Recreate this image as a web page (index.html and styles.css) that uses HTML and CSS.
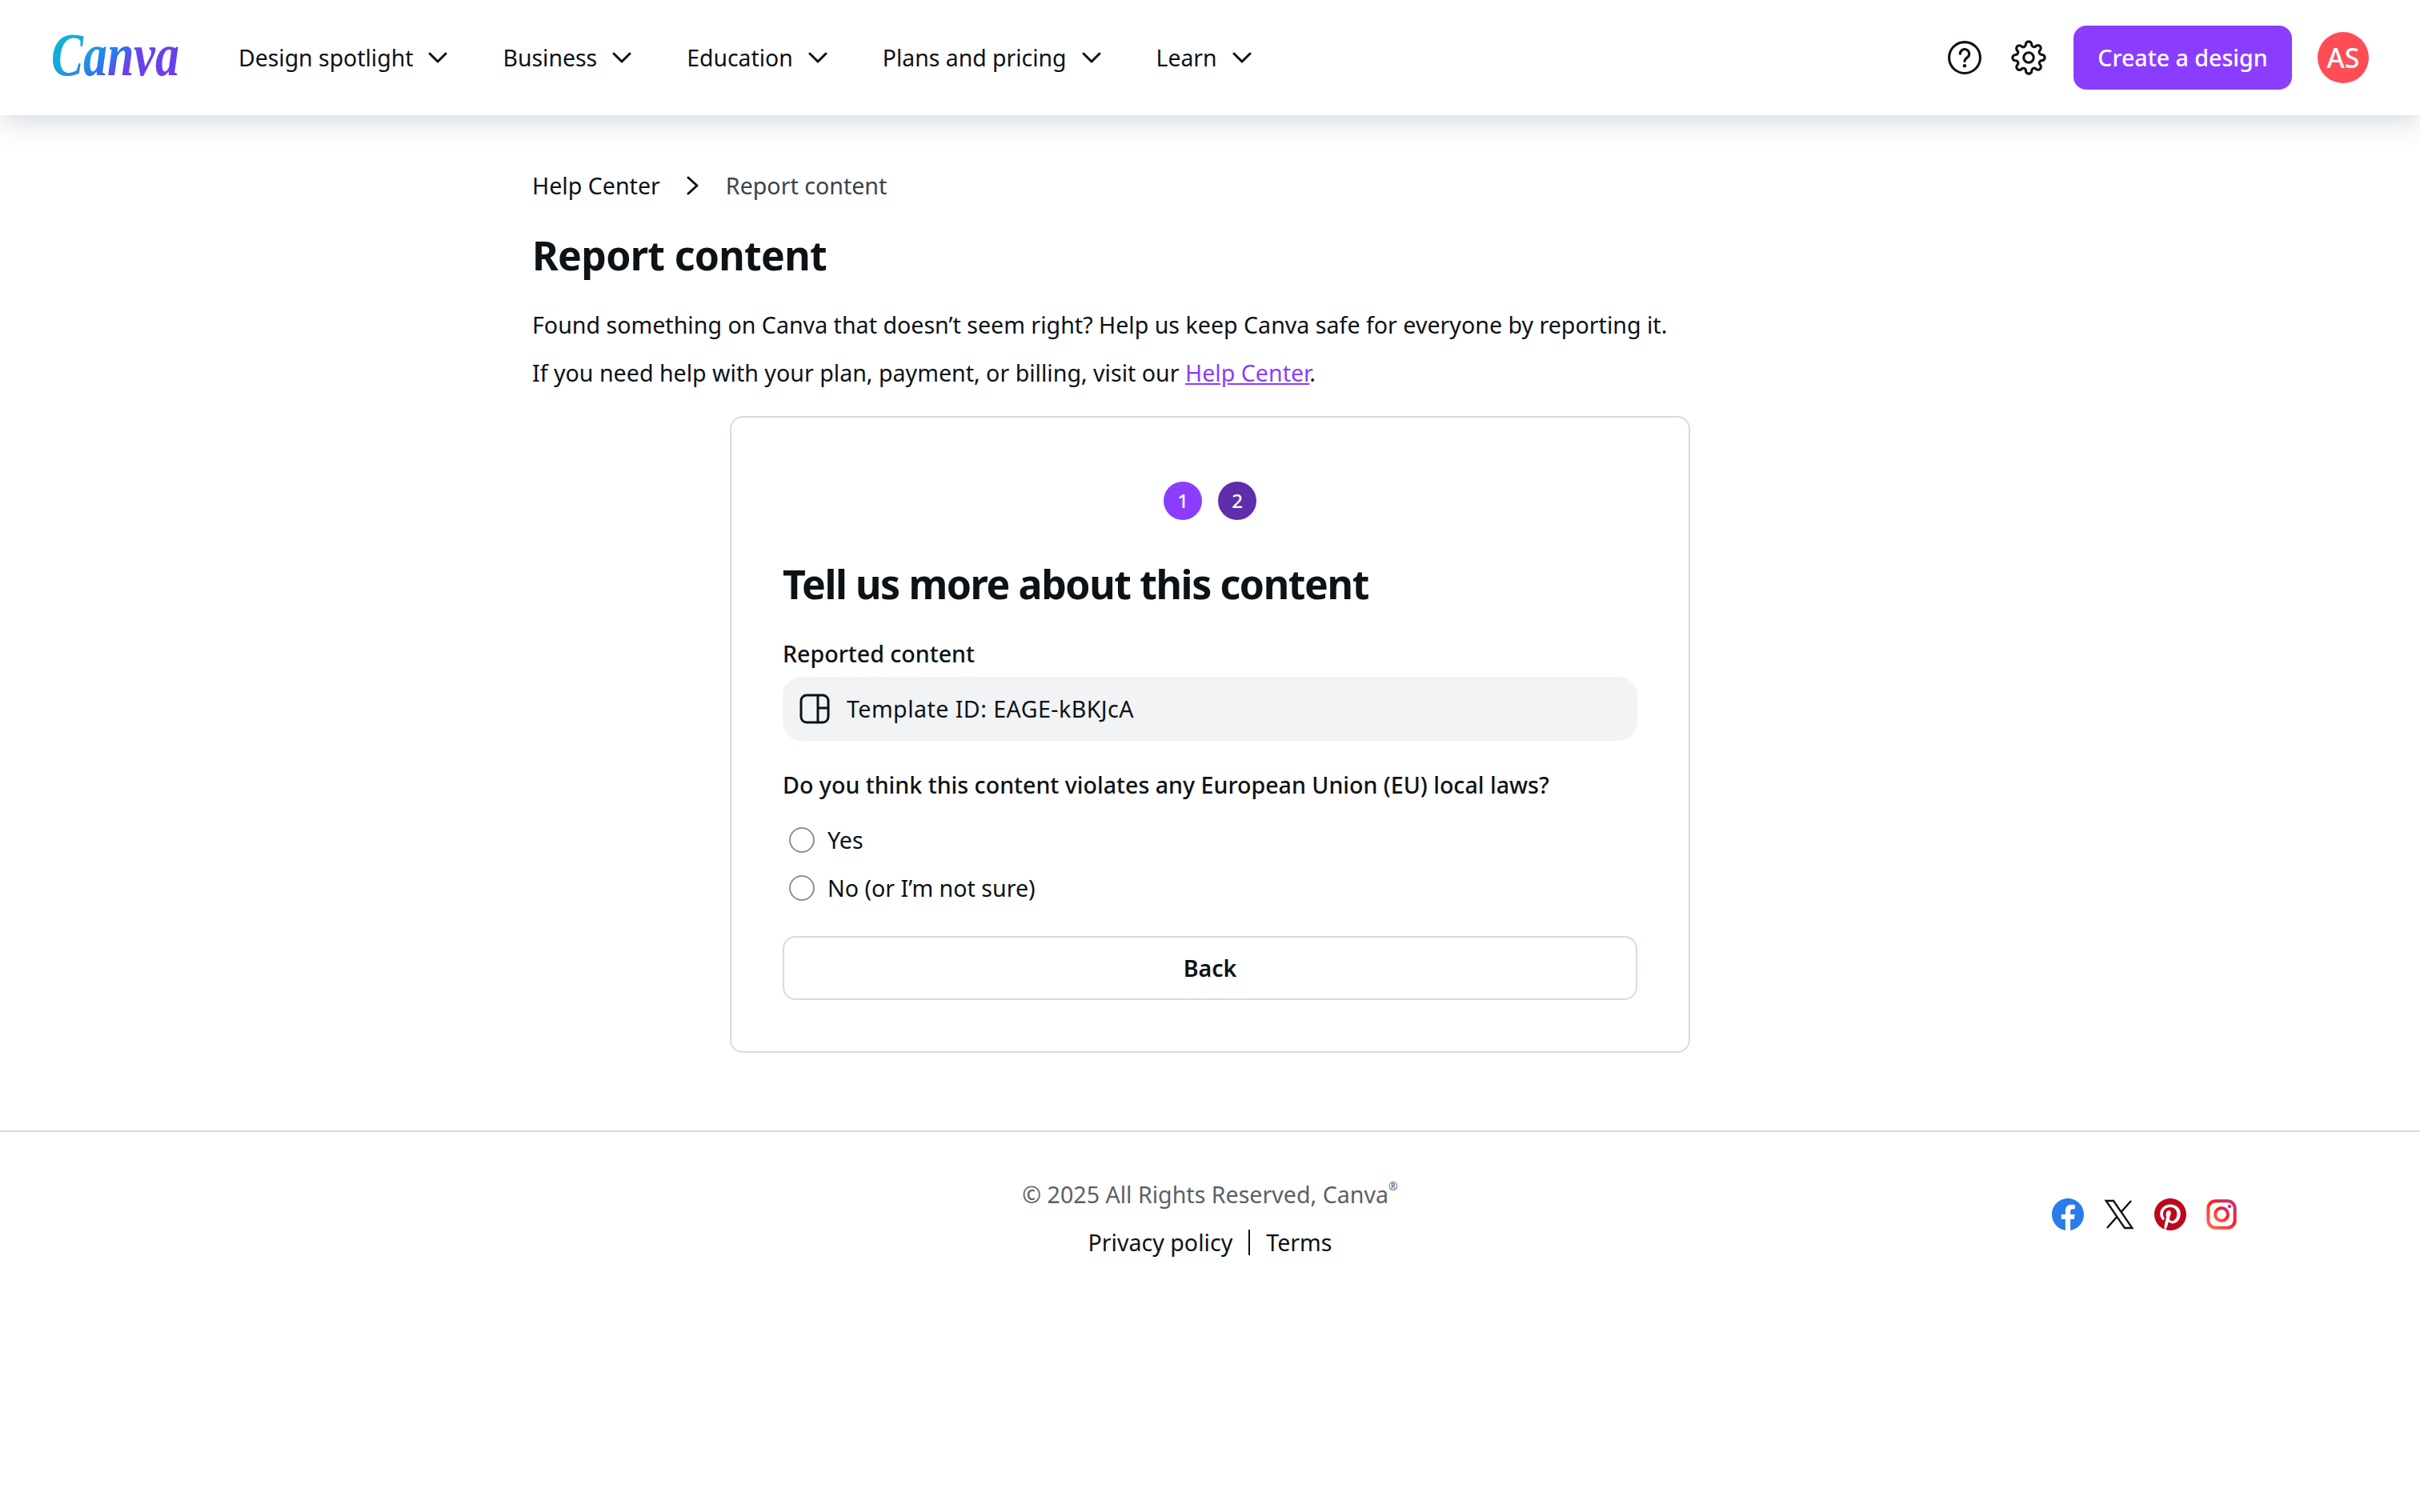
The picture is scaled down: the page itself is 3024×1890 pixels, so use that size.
FILE: index.html
```html
<!DOCTYPE html>
<html lang="en">
<head>
  <meta charset="utf-8">
  <title>Report content</title>
  <link rel="stylesheet" href="styles.css">
</head>
<body>
  <header class="topbar">
    <a class="logo" href="#">
      <svg width="160" height="60" viewBox="0 0 160 60">
        <defs>
          <linearGradient id="logoGrad" x1="0" y1="0" x2="1" y2="0.6">
            <stop offset="0" stop-color="#00c0d4"/>
            <stop offset="0.4" stop-color="#1fa0dc"/>
            <stop offset="0.58" stop-color="#2a78ee"/>
            <stop offset="0.72" stop-color="#6a42e8"/>
            <stop offset="1" stop-color="#6a3ff0"/>
          </linearGradient>
        </defs>
        <text class="logo-text" x="0" y="52" textLength="160" lengthAdjust="spacingAndGlyphs" fill="url(#logoGrad)">Canva</text>
      </svg>
    </a>
    <nav class="nav">
      <a class="nav-item" href="#">Design spotlight <svg class="chev" viewBox="0 0 24 24"><path d="M2 7l10 10L22 7"/></svg></a>
      <a class="nav-item" href="#">Business <svg class="chev" viewBox="0 0 24 24"><path d="M2 7l10 10L22 7"/></svg></a>
      <a class="nav-item" href="#">Education <svg class="chev" viewBox="0 0 24 24"><path d="M2 7l10 10L22 7"/></svg></a>
      <a class="nav-item" href="#">Plans and pricing <svg class="chev" viewBox="0 0 24 24"><path d="M2 7l10 10L22 7"/></svg></a>
      <a class="nav-item" href="#">Learn <svg class="chev" viewBox="0 0 24 24"><path d="M2 7l10 10L22 7"/></svg></a>
    </nav>
    <div class="topbar-right">
      <svg class="tool-icon help-icon" viewBox="0 0 24 24">
        <circle cx="12" cy="12" r="10.6"/>
        <path d="M8.9 9.4a3.1 3.1 0 1 1 4.8 2.6c-1 .7-1.7 1.2-1.7 2.4"/>
        <circle class="dot" cx="12" cy="17.6" r="1.2"/>
      </svg>
      <svg class="tool-icon gear-icon" viewBox="0 0 24 24">
        <circle cx="12" cy="12" r="3.4"/>
        <path d="M19.4 15a1.65 1.65 0 0 0 .33 1.82l.06.06a2 2 0 0 1 0 2.83 2 2 0 0 1-2.83 0l-.06-.06a1.65 1.65 0 0 0-1.82-.33 1.65 1.65 0 0 0-1 1.51V21a2 2 0 0 1-2 2 2 2 0 0 1-2-2v-.09A1.65 1.65 0 0 0 9 19.4a1.65 1.65 0 0 0-1.82.33l-.06.06a2 2 0 0 1-2.83 0 2 2 0 0 1 0-2.83l.06-.06a1.65 1.65 0 0 0 .33-1.82 1.65 1.65 0 0 0-1.51-1H3a2 2 0 0 1-2-2 2 2 0 0 1 2-2h.09A1.65 1.65 0 0 0 4.6 9a1.65 1.65 0 0 0-.33-1.82l-.06-.06a2 2 0 0 1 0-2.83 2 2 0 0 1 2.83 0l.06.06a1.65 1.65 0 0 0 1.82.33H9a1.65 1.65 0 0 0 1-1.51V3a2 2 0 0 1 2-2 2 2 0 0 1 2 2v.09a1.65 1.65 0 0 0 1 1.51 1.65 1.65 0 0 0 1.82-.33l.06-.06a2 2 0 0 1 2.83 0 2 2 0 0 1 0 2.83l-.06.06a1.65 1.65 0 0 0-.33 1.82V9a1.65 1.65 0 0 0 1.51 1H21a2 2 0 0 1 2 2 2 2 0 0 1-2 2h-.09a1.65 1.65 0 0 0-1.51 1z"/>
      </svg>
      <a class="create-btn" href="#">Create a design</a>
      <div class="avatar">AS</div>
    </div>
  </header>

  <main class="page">
    <div class="breadcrumb">
      <a href="#">Help Center</a>
      <svg class="crumb-sep" viewBox="0 0 16 24"><path d="M3 2l11 10L3 22"/></svg>
      <span class="crumb-current">Report content</span>
    </div>
    <h1 class="page-title">Report content</h1>
    <p class="intro">Found something on Canva that doesn’t seem right? Help us keep Canva safe for everyone by reporting it.</p>
    <p class="intro">If you need help with your plan, payment, or billing, visit our <a class="link" href="#">Help Center</a>.</p>

    <section class="card">
      <div class="steps">
        <span class="step">1</span>
        <span class="step step-active">2</span>
      </div>
      <h2 class="card-title">Tell us more about this content</h2>
      <div class="label">Reported content</div>
      <div class="reported">
        <svg class="layout-icon" viewBox="0 0 40 40">
          <rect x="3" y="3" width="34" height="34" rx="7"/>
          <path d="M24 3v34M24 19h13"/>
        </svg>
        <span class="reported-id">Template ID: EAGE-kBKJcA</span>
      </div>
      <div class="label question">Do you think this content violates any European Union (EU) local laws?</div>
      <div class="radios">
        <label class="radio-row"><span class="radio"></span>Yes</label>
        <label class="radio-row"><span class="radio"></span>No (or I’m not sure)</label>
      </div>
      <button class="back-btn">Back</button>
    </section>
  </main>

  <footer class="footer">
    <div></div>
    <div class="footer-mid">
      <div class="copyright">© 2025 All Rights Reserved, Canva<sup>®</sup></div>
      <div class="footer-links">
        <a href="#">Privacy policy</a>
        <span class="footer-sep"></span>
        <a href="#">Terms</a>
      </div>
    </div>
    <div class="socials">
      <svg viewBox="0 0 24 24"><path fill="#2a7ce8" d="M24 12.07C24 5.4 18.63 0 12 0S0 5.4 0 12.07c0 6.03 4.39 11.02 10.13 11.93v-8.44H7.08v-3.49h3.05V9.41c0-3.02 1.79-4.69 4.53-4.69 1.31 0 2.69.24 2.69.24v2.97h-1.52c-1.49 0-1.96.93-1.96 1.89v2.25h3.33l-.53 3.49h-2.8V24C19.61 23.09 24 18.1 24 12.07z"/></svg>
      <svg class="x-icon" viewBox="0 0 24 24"><path d="M2.2 1.8h5.6l14 20.4h-5.6zM21 1.8l-7.6 8.6M3 22.2l7.8-8.9"/></svg>
      <svg viewBox="0 0 24 24"><path fill="#bd081c" d="M12 0C5.373 0 0 5.372 0 12c0 5.084 3.163 9.426 7.627 11.174-.105-.949-.2-2.405.042-3.441.218-.937 1.407-5.965 1.407-5.965s-.359-.719-.359-1.782c0-1.668.967-2.914 2.171-2.914 1.023 0 1.518.769 1.518 1.69 0 1.029-.655 2.568-.994 3.995-.283 1.194.599 2.169 1.777 2.169 2.133 0 3.772-2.249 3.772-5.495 0-2.873-2.064-4.882-5.012-4.882-3.414 0-5.418 2.561-5.418 5.207 0 1.031.397 2.138.893 2.738a.36.36 0 0 1 .083.345l-.333 1.36c-.053.22-.174.267-.402.161-1.499-.698-2.436-2.889-2.436-4.649 0-3.785 2.75-7.262 7.929-7.262 4.163 0 7.398 2.967 7.398 6.931 0 4.136-2.607 7.464-6.227 7.464-1.216 0-2.359-.631-2.75-1.378l-.748 2.853c-.271 1.043-1.002 2.35-1.492 3.146C9.57 23.812 10.763 24 12 24c6.627 0 12-5.373 12-12S18.627 0 12 0z"/></svg>
      <svg viewBox="0 0 24 24">
        <defs>
          <linearGradient id="igGrad" x1="0" y1="1" x2="1" y2="0">
            <stop offset="0" stop-color="#ff6a55"/>
            <stop offset="0.6" stop-color="#fd1d1d"/>
            <stop offset="1" stop-color="#c13584"/>
          </linearGradient>
        </defs>
        <rect class="ig" x="2" y="2" width="20" height="20" rx="5.5"/>
        <circle class="ig" cx="12" cy="12" r="4.8"/>
        <circle cx="18" cy="6" r="1.3" fill="#d62976"/>
      </svg>
    </div>
  </footer>
</body>
</html>
```

FILE: styles.css
```css
* {
  box-sizing: border-box;
}

body {
  margin: 0;
  background: #fff;
  color: #0d1216;
  font-family: "Noto Sans", sans-serif;
  font-size: 28.6px;
  line-height: 48px;
}

a {
  color: inherit;
  text-decoration: none;
}

/* top bar */
.topbar {
  display: flex;
  align-items: center;
  height: 144px;
  padding: 0 64px;
  background: #fff;
  box-shadow: 0 8px 32px rgba(64, 87, 109, 0.22);
}

.logo {
  display: block;
  width: 160px;
  height: 60px;
}

.logo svg {
  overflow: visible;
}

.logo-text {
  font-family: "Liberation Serif", serif;
  font-style: italic;
  font-weight: 700;
  font-size: 76px;
}

.nav {
  display: flex;
  gap: 69px;
  margin-left: 74px;
  font-size: 28.4px;
}

.nav-item {
  display: flex;
  align-items: center;
  gap: 19px;
}

.chev {
  width: 24px;
  height: 24px;
  fill: none;
  stroke: #0d1216;
  stroke-width: 3;
  stroke-linecap: round;
  stroke-linejoin: round;
}

.topbar-right {
  display: flex;
  align-items: center;
  margin-left: auto;
}

.tool-icon {
  width: 44px;
  height: 44px;
  fill: none;
  stroke: #0d1216;
  stroke-width: 1.7;
  stroke-linecap: round;
  stroke-linejoin: round;
}

.help-icon {
  margin-right: 36px;
}

.gear-icon {
  margin-right: 34px;
}

.dot {
  fill: #0d1216;
  stroke: none;
}

.create-btn {
  display: block;
  height: 80px;
  width: 273px;
  line-height: 80px;
  text-align: center;
  border-radius: 16px;
  background: #8b3dff;
  color: #fff;
  font-weight: 500;
}

.avatar {
  width: 64px;
  height: 64px;
  margin-left: 32px;
  border-radius: 50%;
  background: #ff4d57;
  color: #fff;
  font-size: 34px;
  font-weight: 500;
  line-height: 64px;
  text-align: center;
}

/* page body */
.page {
  width: 1694px;
  margin: 0 auto;
  padding-top: 64px;
}

.breadcrumb {
  display: flex;
  align-items: center;
}

.crumb-sep {
  width: 16px;
  height: 24px;
  margin: 0 34px 0 32px;
  fill: none;
  stroke: #0d1216;
  stroke-width: 3;
  stroke-linecap: round;
  stroke-linejoin: round;
}

.crumb-current {
  color: #3c434b;
}

.page-title {
  margin: 31px 0 0;
  font-size: 50px;
  line-height: 64px;
  font-weight: 700;
  letter-spacing: -0.7px;
}

.intro {
  margin: 0 0 12px;
}

.page-title + .intro {
  margin-top: 31px;
}

.link {
  color: #8b3dff;
  text-decoration: underline;
}

.card {
  width: 1200px;
  margin: 30px auto 0;
  padding: 80px 64px 64px;
  border: 2px solid #d8dbdf;
  border-radius: 16px;
}

.steps {
  display: flex;
  justify-content: center;
  gap: 20px;
}

.step {
  width: 48px;
  height: 48px;
  border-radius: 50%;
  background: #8b3dff;
  color: #fff;
  font-size: 24px;
  font-weight: 500;
  line-height: 48px;
  text-align: center;
}

.step-active {
  background: #5f2eaa;
}

.card-title {
  margin: 50px 0 0;
  font-size: 50px;
  line-height: 60px;
  font-weight: 700;
  letter-spacing: -1.4px;
}

.label {
  margin-top: 33px;
  font-weight: 500;
}

.reported {
  display: flex;
  align-items: center;
  gap: 20px;
  height: 80px;
  margin-top: 5px;
  padding: 0 20px;
  border-radius: 24px;
  background: #f2f3f5;
}

.reported-id {
  letter-spacing: 0.45px;
}

.layout-icon {
  width: 40px;
  height: 40px;
  fill: none;
  stroke: #0d1216;
  stroke-width: 3;
}

.question {
  margin-top: 31px;
}

.radios {
  display: flex;
  flex-direction: column;
  gap: 12px;
  margin-top: 21px;
}

.radio-row {
  display: flex;
  align-items: center;
  gap: 16px;
  padding-left: 8px;
}

.radio {
  width: 32px;
  height: 32px;
  border: 2px solid #8c9096;
  border-radius: 50%;
}

.back-btn {
  display: block;
  width: 100%;
  height: 80px;
  margin-top: 36px;
  border: 2px solid #d8dbdf;
  border-radius: 16px;
  background: #fff;
  color: #0d1216;
  font: inherit;
  font-weight: 600;
}

/* footer */
.footer {
  display: grid;
  grid-template-columns: 1fr auto 1fr;
  margin-top: 97px;
  padding: 54px 228px 0;
  border-top: 2px solid #d8dbdf;
}

.footer-mid {
  display: flex;
  flex-direction: column;
  align-items: center;
  gap: 12px;
}

.copyright {
  color: #5a6068;
}

.copyright sup {
  font-size: 14px;
  line-height: 0;
  vertical-align: 16px;
}

.footer-links {
  display: flex;
  align-items: center;
}

.footer-sep {
  width: 2px;
  height: 32px;
  margin: 0 20px;
  background: #0d1216;
}

.socials {
  display: flex;
  justify-content: flex-end;
  gap: 24px;
  margin-top: 29px;
}

.socials svg {
  width: 40px;
  height: 40px;
}

.x-icon {
  fill: none;
  stroke: #0d1216;
  stroke-width: 1.4;
}

.ig {
  fill: none;
  stroke: url(#igGrad);
  stroke-width: 2.4;
}
```
